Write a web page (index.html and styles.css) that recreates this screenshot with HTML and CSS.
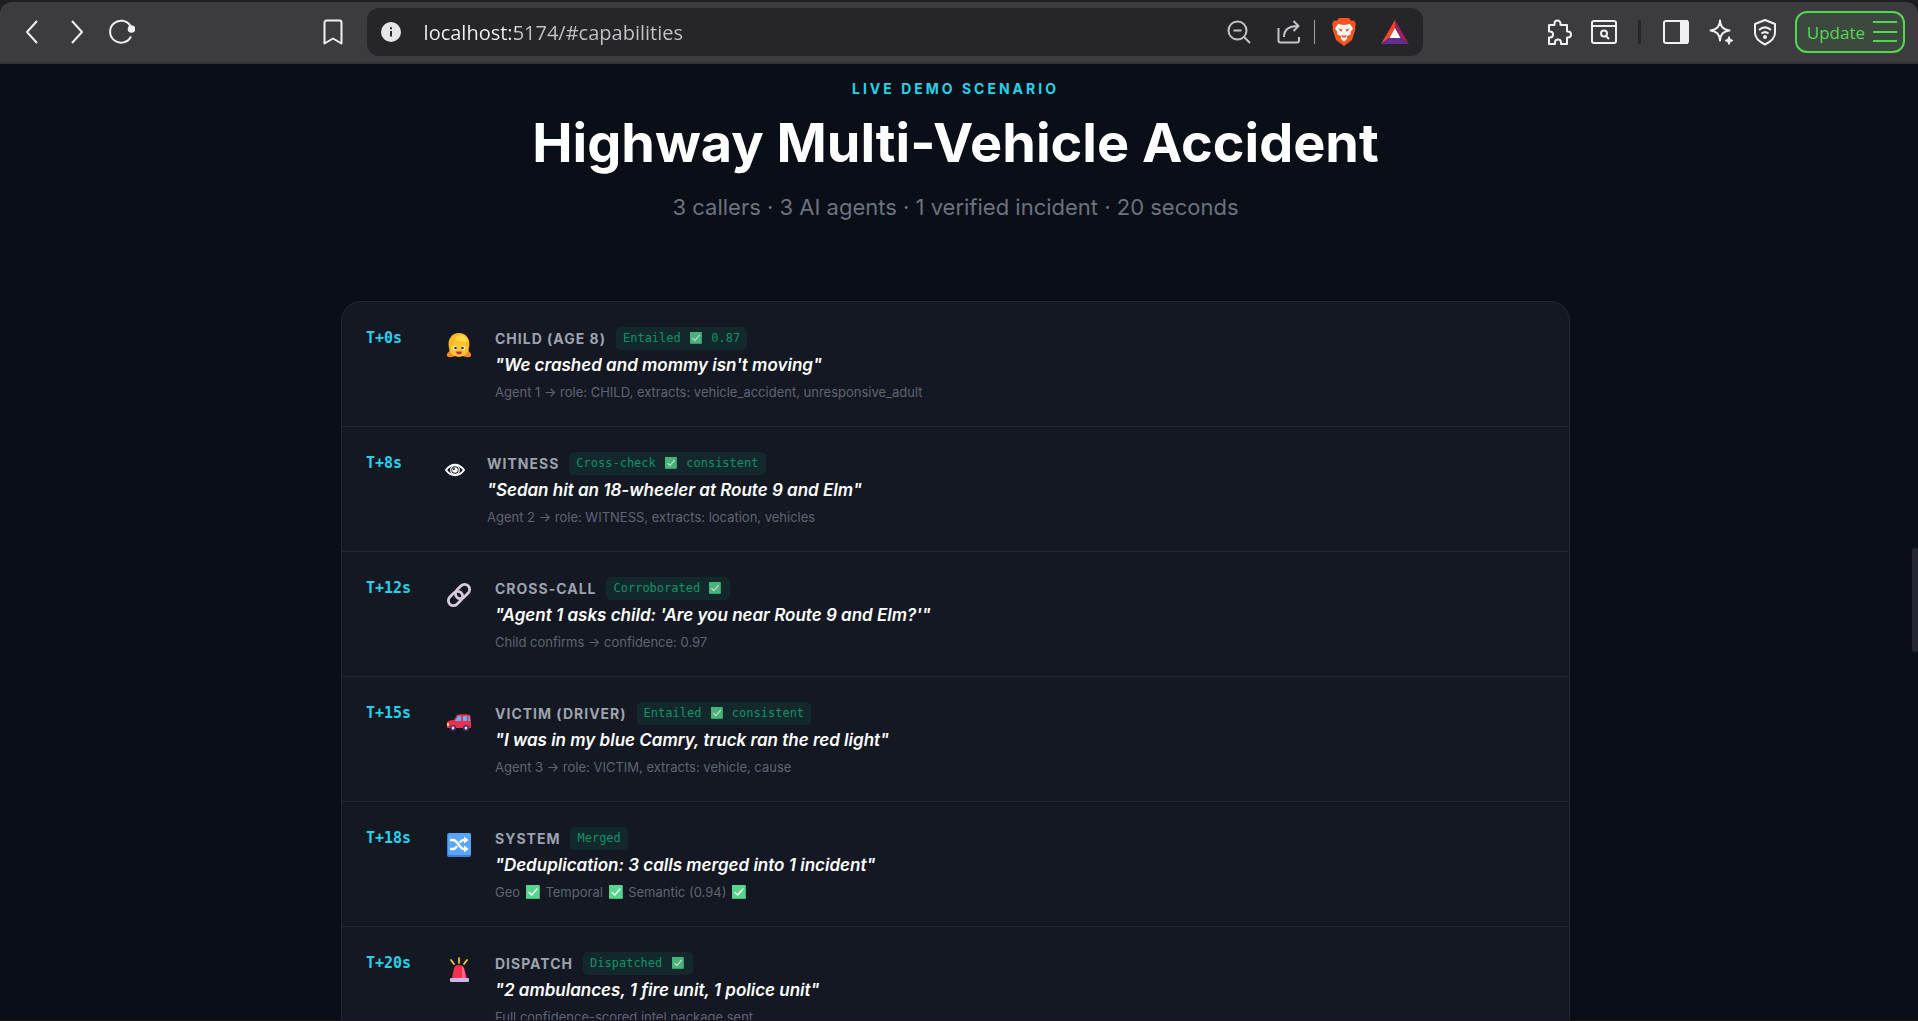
FILE: index.html
```
<!DOCTYPE html>
<html lang="en">
<head>
    <meta charset="UTF-8">
    <meta name="viewport" content="width=device-width, initial-scale=1.0">
    <title>Live Demo Scenario</title>
    <link rel="stylesheet" href="styles.css">
</head>
<body>
    <!-- shared emoji -->
    <svg class="defs" aria-hidden="true">
        <symbol id="check" viewBox="0 0 16 16">
            <rect width="16" height="16" rx="1" fill="#3fae74"/>
            <rect width="15" height="15" rx="1" fill="#55d68c"/>
            <path d="M3.5 8.5l3 3 6-7" fill="none" stroke="#fff" stroke-width="1.6" stroke-linecap="round" stroke-linejoin="round"/>
        </symbol>
    </svg>

    <header class="toolbar">
        <nav class="nav-buttons">
            <button aria-label="Back"><svg width="26" height="28" viewBox="0 0 26 28"><path d="M18 3L8 14l10 11"/></svg></button>
            <button aria-label="Forward"><svg width="26" height="28" viewBox="0 0 26 28"><path d="M9 3l10 11L9 25"/></svg></button>
            <button aria-label="Reload"><svg width="28" height="28" viewBox="0 0 28 28"><path d="M24 18.5A11 11 0 1 1 23.500 8"/><circle cx="24.500" cy="11" r="2.800" fill="#f0f0f3"/></svg></button>
        </nav>
        <button class="bookmark" aria-label="Bookmark"><svg width="22" height="28" viewBox="0 0 22 28"><path d="M2.500 4.500a2 2 0 0 1 2-2h13a2 2 0 0 1 2 2V25.500L11 20.500l-8.500 5z"/></svg></button>
        <div class="address">
            <svg width="20" height="20" viewBox="0 0 20 20"><circle cx="10" cy="10" r="10" fill="#e6e6ea" stroke="none"/><path d="M10 9v5.500M10 5.200v2" stroke="#26252a"/></svg>
            <input type="text" aria-label="Address" value="localhost:5174/#capabilities">
            <div class="address-icons">
                <button aria-label="Zoom"><svg width="26" height="26" viewBox="0 0 26 26"><circle cx="11.500" cy="11.500" r="9"/><path d="M18 18l6 6M7.500 11.500h8"/></svg></button>
                <button aria-label="Share"><svg width="26" height="26" viewBox="0 0 26 26"><path d="M2.500 9v12.500a2 2 0 0 0 2 2H21a2 2 0 0 0 2-2V18M8 18c0-7 4-11 14-11M17.500 2l5 5-5 5"/></svg></button>
                <span class="thin-line"></span>
                <button aria-label="Shields"><svg width="26" height="28" viewBox="0 0 26 28" class="plain"><path d="M8 0h10l2.500 3 2.500-.5 2 3.500-1 3 .5 2-3.500 11-8 6-8-6L1.500 11l.5-2-1-3L3 2.500l2.500.5z" fill="#fb5420"/><path d="M7 6l6 1 6-1 3 4.500-2.500 3.500.5 2-4.500 2.500 1 2-3.500 3-3.500-3 1-2L6 16l.5-2L4 10.500z" fill="#fff"/><path d="M7 10.500l4.500 1-1 2.500zM19 10.500l-4.500 1 1 2.500zM10 16.500l3 1.500 3-1.500-1.500 3h-3z" fill="#fb5420"/></svg></button>
                <button aria-label="Rewards"><svg width="28" height="26" viewBox="0 0 28 26" class="plain"><path d="M14 1v8L9 18 0 25z" fill="#ff4724"/><path d="M14 1v8l5 9 9 7z" fill="#9e1f63"/><path d="M0 25l9-7h10l9 7z" fill="#662d91"/><path d="M14 9l5.500 10h-11z" fill="#fff"/></svg></button>
            </div>
        </div>
        <div class="tools">
            <button aria-label="Extensions"><svg width="28" height="28" viewBox="0 0 28 28"><path d="M4 7h5.500V5.500a3 3 0 0 1 6 0V7H22v6.500h1a3 3 0 0 1 0 6h-1V26h-6v-1.500a3 3 0 0 0-6 0V26H4v-6.500h1a3 3 0 0 0 0-6H4z"/></svg></button>
            <button aria-label="Find"><svg width="28" height="28" viewBox="0 0 28 28"><rect x="2" y="3" width="24" height="22" rx="2"/><path d="M2 8h24M16 18l3 3"/><circle cx="14" cy="15.500" r="3"/></svg></button>
            <span class="thick-line"></span>
            <button aria-label="Side panel"><svg width="28" height="28" viewBox="0 0 28 28"><rect x="2" y="3" width="24" height="22" rx="2"/><path d="M19 3h6v22h-6z" fill="#f0f0f3"/></svg></button>
            <button aria-label="Assistant"><svg width="28" height="28" viewBox="0 0 28 28"><path d="M13 2.500c.5 6.500 3 9 9.500 10-6.500 1-9 3.500-9.500 10-.5-6.500-3-9-9.500-10 6.500-1 9-3.500 9.500-10z"/><path d="M22 18.500l1.200 2.800 2.800 1.200-2.800 1.200L22 26.500l-1.200-2.800-2.800-1.200 2.800-1.200z" fill="#f0f0f3" stroke-width="1"/></svg></button>
            <button aria-label="VPN"><svg width="26" height="28" viewBox="0 0 26 28"><path d="M13 2l10 4v9c0 5-5 9-10 11.500C8 24 3 20 3 15V6z"/><path d="M7 12c4-3.500 8-3.500 12 0M9.500 15.500c2.500-2 4.500-2 7 0"/><circle cx="13" cy="19" r="1"/></svg></button>
            <button class="update">Update <svg width="24" height="22" viewBox="0 0 24 22"><path d="M0 1h24M0 11h24M0 20h24"/></svg></button>
        </div>
    </header>

    <main class="page">
        <p class="eyebrow">LIVE DEMO SCENARIO</p>
        <h1>Highway Multi-Vehicle Accident</h1>
        <p class="subtitle">3 callers · 3 AI agents · 1 verified incident · 20 seconds</p>

        <section class="timeline">
            <article class="event">
                <time>T+0s</time>
                <svg class="emoji" viewBox="0 0 28 28"><path d="M5 18c0 3-4 4-3 7 2 2 6 1 8 0h8c2 1 6 2 8 0 1-3-3-4-3-7z" fill="#f58a2c"/><circle cx="14" cy="16" r="10" fill="#ffc42e"/><path d="M4 17C2 8 7 2 14 2s12 6 10 15c-2-2-2-4-4-5-5 0-8-1-10-3-1 3-3 5-6 8z" fill="#ffb821"/><path d="M10 8c1-4 7-5 11-2 2 2 2 4 1 5-5 0-9 0-12-3z" fill="#ffd84a"/><circle cx="10" cy="17" r="2" fill="#fff"/><circle cx="18" cy="17" r="2" fill="#fff"/><circle cx="10.500" cy="17" r="1.300" fill="#402a32"/><circle cx="17.500" cy="17" r="1.300" fill="#402a32"/><path d="M11 20.500h6c0 4-6 4-6 0z" fill="#c22a4b"/></svg>
                <div class="details">
                    <div class="who"><h2>CHILD (AGE 8)</h2><span class="badge">Entailed <svg class="check"><use href="#check"/></svg> 0.87</span></div>
                    <p class="quote">"We crashed and mommy isn't moving"</p>
                    <p class="note">Agent 1 → role: CHILD, extracts: vehicle_accident, unresponsive_adult</p>
                </div>
            </article>
            <article class="event">
                <time>T+8s</time>
                <svg class="emoji narrow" viewBox="0 0 20 28"><path d="M1 14c5-7 13-7 18 0-5 7-13 7-18 0z" fill="none" stroke="#fff" stroke-width="2"/><circle cx="10" cy="14" r="4.300" fill="none" stroke="#fff" stroke-width="1.300"/><circle cx="10" cy="14" r="2.800" fill="#fff"/><circle cx="9" cy="13" r="1" fill="#141822"/></svg>
                <div class="details">
                    <div class="who"><h2>WITNESS</h2><span class="badge">Cross-check <svg class="check"><use href="#check"/></svg> consistent</span></div>
                    <p class="quote">"Sedan hit an 18-wheeler at Route 9 and Elm"</p>
                    <p class="note">Agent 2 → role: WITNESS, extracts: location, vehicles</p>
                </div>
            </article>
            <article class="event">
                <time>T+12s</time>
                <svg class="emoji" viewBox="0 0 28 28"><g fill="none" stroke="#d9c8dd" stroke-width="2.800"><rect x="-8" y="-5" width="16" height="10" rx="5" transform="translate(17.500 10.500) rotate(-45)"/><rect x="-8" y="-5" width="16" height="10" rx="5" transform="translate(10.500 17.500) rotate(-45)"/></g></svg>
                <div class="details">
                    <div class="who"><h2>CROSS-CALL</h2><span class="badge">Corroborated <svg class="check"><use href="#check"/></svg></span></div>
                    <p class="quote">"Agent 1 asks child: 'Are you near Route 9 and Elm?'"</p>
                    <p class="note">Child confirms → confidence: 0.97</p>
                </div>
            </article>
            <article class="event">
                <time>T+15s</time>
                <svg class="emoji" viewBox="0 0 28 28"><path d="M2 22v-5c0-2 3-3 7-3l3-5c1-1 12-1 13 0 1 3 1 9 1 13z" fill="#ef2f4f"/><path d="M10.500 14l2.500-4h3v5h-6zM18 10h4v5h-4zM23.500 10h1l.8 5h-1.800z" fill="#5fb4ff"/><path d="M2 17h2v3H2z" fill="#ffe03d"/><circle cx="8" cy="22" r="3" fill="#4a2f68"/><circle cx="8" cy="22" r="1.400" fill="#e6dcee"/><circle cx="21" cy="22" r="3" fill="#4a2f68"/><circle cx="21" cy="22" r="1.400" fill="#e6dcee"/></svg>
                <div class="details">
                    <div class="who"><h2>VICTIM (DRIVER)</h2><span class="badge">Entailed <svg class="check"><use href="#check"/></svg> consistent</span></div>
                    <p class="quote">"I was in my blue Camry, truck ran the red light"</p>
                    <p class="note">Agent 3 → role: VICTIM, extracts: vehicle, cause</p>
                </div>
            </article>
            <article class="event">
                <time>T+18s</time>
                <svg class="emoji" viewBox="0 0 28 28"><rect x="2" y="2" width="24" height="24" rx="2" fill="#3f7ede"/><rect x="3" y="2" width="23" height="22" rx="2" fill="#58a6fb"/><path d="M5 9h3c5 0 6 9 11 9h2M5 18h3c2 0 3-1 4-3M14.500 11.500C16 10 17 9 19 9h2" fill="none" stroke="#fff" stroke-width="2.400"/><path d="M19 5.500l4.500 3.500-4.500 3.500zM19 14.500l4.500 3.500-4.500 3.500z" fill="#fff"/></svg>
                <div class="details">
                    <div class="who"><h2>SYSTEM</h2><span class="badge">Merged</span></div>
                    <p class="quote">"Deduplication: 3 calls merged into 1 incident"</p>
                    <p class="note">Geo <svg class="check"><use href="#check"/></svg> Temporal <svg class="check"><use href="#check"/></svg> Semantic (0.94) <svg class="check"><use href="#check"/></svg></p>
                </div>
            </article>
            <article class="event">
                <time>T+20s</time>
                <svg class="emoji" viewBox="0 0 28 28"><path d="M14 2v5M6 4l3 4M22 4l-3 4" stroke="#ffc83d" stroke-width="1.700" stroke-linecap="round"/><path d="M7 22l2-10c1-4 9-4 10 0l3 10z" fill="#f5304f"/><path d="M17 10c2 1 3 6 3 12h-3z" fill="#ff6a8a"/><rect x="5" y="22" width="19" height="4" rx="1" fill="#c9b8e8"/></svg>
                <div class="details">
                    <div class="who"><h2>DISPATCH</h2><span class="badge">Dispatched <svg class="check"><use href="#check"/></svg></span></div>
                    <p class="quote">"2 ambulances, 1 fire unit, 1 police unit"</p>
                    <p class="note">Full confidence-scored intel package sent</p>
                </div>
            </article>
        </section>
        <span class="scroll-thumb"></span>
    </main>
</body>
</html>
```
FILE: styles.css
```
* {
    box-sizing: border-box;
    margin: 0;
    padding: 0;
}
body {
    display: flex;
    flex-direction: column;
    height: 100vh;
    overflow: hidden;
    background: #1f1e23;
    font-family: Inter, sans-serif;
    color: #fff;
}
button {
    display: flex;
    align-items: center;
    border: none;
    background: none;
    cursor: pointer;
}
.defs {
    display: none;
}

/* browser toolbar */
.toolbar {
    display: flex;
    align-items: center;
    flex: none;
    height: 62px;
    margin-top: 2px;
    padding: 0 13px 0 19px;
    background: #3c3b40;
    border-bottom: 2px solid #333237;
    border-radius: 12px 12px 0 0;
}
.toolbar svg {
    fill: none;
    stroke: #f0f0f3;
    stroke-width: 2;
    stroke-linejoin: round;
}
.toolbar svg.plain {
    stroke: none;
}
.nav-buttons {
    display: flex;
    gap: 18px;
}
.bookmark {
    margin-left: auto;
}
.address {
    display: flex;
    align-items: center;
    width: 56%;
    height: 48px;
    margin: 0 122px 0 23px;
    padding: 0 14px;
    border-radius: 12px;
    background: #26252a;
}
.address input {
    flex: 1;
    min-width: 0;
    height: 32px;
    margin-left: 23px;
    border: none;
    outline: none;
    /* host is brighter than the path */
    background: linear-gradient(90deg, #f4f4f6 92px, #c4c4c8 92px);
    background-clip: text;
    color: transparent;
    font: 20px "Open Sans", sans-serif;
}
.address-icons {
    display: flex;
    align-items: center;
    gap: 24px;
}
.address-icons svg {
    stroke: #c4c4c8;
}
.thin-line {
    width: 1px;
    height: 24px;
    margin: 0 -8px 0 -12px;
    background: #a0a0a4;
}
.thick-line {
    width: 3px;
    height: 24px;
    margin: 0 4px 0 3px;
    background: #26252a;
}
.tools {
    display: flex;
    align-items: center;
    gap: 17px;
}
.update {
    gap: 8px;
    height: 42px;
    padding: 0 6px 0 10px;
    border: 2px solid #52d84f;
    border-radius: 12px;
    background: #3d483f;
    color: #52d84f;
    font: 17px "Open Sans", sans-serif;
}
.update svg {
    stroke: #52d84f;
}

/* page */
.page {
    position: relative;
    flex: 1;
    min-height: 0;
    padding: 15px 348px 0 341px;
    overflow: hidden;
    background: #0a0e17;
    border-bottom: 1px solid #1f1419;
    text-align: center;
}
.eyebrow {
    color: #22d3ee;
    font-size: 14px;
    line-height: 20px;
    font-weight: 700;
    letter-spacing: 3px;
}
h1 {
    margin-top: 10px;
    font-size: 54px;
    line-height: 68px;
    font-weight: 700;
}
.subtitle {
    margin-top: 14px;
    color: #6b7280;
    font-size: 22px;
    line-height: 32px;
}
.timeline {
    margin-top: 78px;
    border: 1px solid #232733;
    border-radius: 20px;
    background: #141822;
    text-align: left;
}
.event {
    display: flex;
    gap: 24px;
    padding: 24px;
    height: 125px;
    border-bottom: 1px solid #232733;
}
time {
    flex: none;
    width: 55px;
    color: #22d3ee;
    font: bold 15px/24px "DejaVu Sans Mono", monospace;
}
.emoji {
    flex: none;
    width: 28px;
    height: 28px;
    margin: 5px -2px 0 0;
}
.emoji.narrow {
    width: 20px;
}
.who {
    display: flex;
    align-items: center;
    gap: 10px;
    height: 24px;
}
h2 {
    color: #9ca3af;
    font-size: 14px;
    font-weight: 700;
    letter-spacing: 1px;
}
.badge {
    padding: 0 7px;
    border-radius: 5px;
    background: #12282b;
    color: #0f9468;
    font: 12px/23px "DejaVu Sans Mono", monospace;
}
.check {
    width: 14px;
    height: 14px;
    margin: 0 2px;
    vertical-align: -2px;
}
.badge .check {
    width: 12px;
    height: 12px;
    opacity: 0.8;
    vertical-align: -2px;
}
.quote {
    margin-top: 2px;
    font-size: 17px;
    line-height: 26px;
    font-style: italic;
    font-weight: 600;
}
.note {
    margin-top: 2px;
    color: #5f6472;
    font-size: 13px;
    line-height: 24px;
}
.scroll-thumb {
    position: absolute;
    top: 484px;
    right: 0;
    width: 6px;
    height: 104px;
    border-radius: 3px;
    background: #252630;
}
```
